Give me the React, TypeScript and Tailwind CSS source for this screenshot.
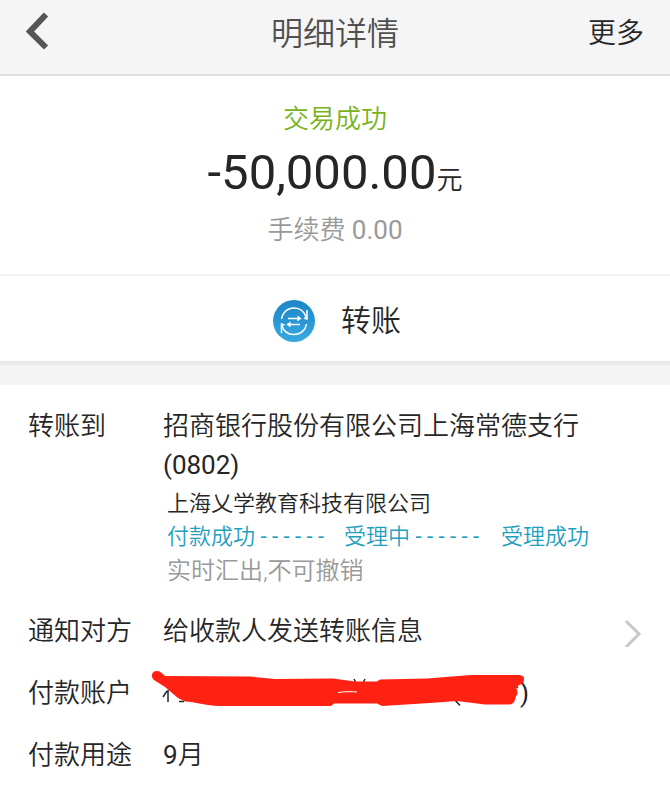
import type { ReactNode } from "react";

function Row({ label, children }: { label: string; children: ReactNode }) {
  return (
    <div className="flex">
      <dt className="w-[135px] shrink-0 text-[26px] leading-[39px]">{label}</dt>
      <dd className="min-w-0 flex-1 text-[26px] leading-[39px]">{children}</dd>
    </div>
  );
}

function TransferIcon() {
  return (
    <svg viewBox="0 0 42 42" className="h-[42px] w-[42px]" fill="none" aria-hidden="true">
      <defs>
        <linearGradient id="disc" x1="0" y1="0" x2="0" y2="1">
          <stop offset="0" stopColor="#1b86c6" />
          <stop offset="1" stopColor="#38a8e2" />
        </linearGradient>
      </defs>
      <circle cx="21" cy="21" r="21" fill="url(#disc)" />
      <g stroke="#fff" strokeWidth="1.5">
        <path d="M8.500 19C9.500 12.500 14.500 8 21 8c6 0 10.500 3.500 12.500 10" />
        <path d="M34 10v9l-3-1" />
        <path d="M33.500 24C32.500 30.500 27.500 34.500 21 34.500c-6 0-10.500-3.500-12.500-9.500" />
        <path d="M8.500 33v-9l3 1" />
        <path d="M15 18.500h10M27 24.500H17" />
      </g>
      <path d="M24.500 15.500l4 3-4 3zM17.500 21.500l-4 3 4 3z" fill="#fff" />
    </svg>
  );
}

function Redaction() {
  return (
    <svg
      viewBox="0 0 390 55"
      className="absolute -top-3 -left-[18px] h-[55px] w-[390px]"
      fill="none"
      aria-hidden="true"
    >
      <path
        d="M23 28v12M22 29l-4 6M34 39.500h5M209 17l2 4M220 17l-2 4M309 37l6 6.500M370 24l3 2"
        stroke="#262626"
        strokeWidth="1.500"
      />
      <path
        d="M12 9C15 9 17 11 20 14L105 14.500 130 17 188 16.500 210 19.500 232 19.500 235 17.500 282 16.500 326 13H373C377 13 379 14 379 17C379 21 378 22 374 23L371 26C373 29 373 32 371 34C370 39 369 42 364 42.500H340L312 39 285 41 237 44 232 41.500H189L186 44H75C60 43.500 50 40 40 39.500L33 36 20 25 9 18C5 14 7 9 12 9Z"
        fill="#ff2112"
      />
      <path d="M193 30.500c5-1 14-1 19-.5" stroke="#fff" strokeWidth="1" />
    </svg>
  );
}

export default function App() {
  return (
    <div className="min-h-screen bg-white font-['Roboto','Noto_Sans_CJK_SC',sans-serif] font-[350] text-[#262626]">
      <header className="grid grid-cols-3 items-start border-b-2 border-[#dfdfdf] bg-[#f5f5f5] px-[26px] pt-[10px] pb-4">
        <button type="button" aria-label="返回" className="justify-self-start pt-0.5">
          <svg viewBox="0 0 24 38" className="h-[38px] w-6" fill="none" aria-hidden="true">
            <path d="M20 2.500L4 19.500l16 16" stroke="#555" strokeWidth="6" />
          </svg>
        </button>
        <h1 className="justify-self-center text-[32px] leading-[48px] text-[#505050]">明细详情</h1>
        <button type="button" className="justify-self-end text-[28px] leading-[48px]">更多</button>
      </header>

      <main>
        <section className="border-b-2 border-[#f2f2f2] pt-6 pb-7 text-center">
          <p className="text-[26px] leading-[39px] text-[#77b41c]">交易成功</p>
          <p className="text-[49px] leading-[68px]">
            <span className="font-normal">-50,000.00</span>
            <span className="text-[26px]">元</span>
          </p>
          <p className="text-[26px] leading-8 text-[#999]">
            手续费 <span className="font-normal">0.00</span>
          </p>
        </section>

        <section className="flex items-center justify-center gap-[26px] pt-[22px] pb-[18px] pl-1">
          <TransferIcon />
          <h2 className="text-[30px] leading-[45px]">转账</h2>
        </section>

        <div className="h-6 border-t-4 border-[#e9e9e9] bg-[#f4f4f4]" />

        <dl className="flex flex-col gap-[23px] px-7 pt-[22px] pb-6">
          <Row label="转账到">
            <p className="max-w-[440px]">
              招商银行股份有限公司上海常德支行<span className="font-normal">(0802)</span>
            </p>
            <div className="pl-1 text-[22px] leading-[33px]">
              <p className="pt-0.5">上海乂学教育科技有限公司</p>
              <p className="flex text-[#1f9fc0]">
                <span className="w-[177px]">
                  付款成功 <span className="font-normal">- - - - - -</span>
                </span>
                <span className="w-[157px]">
                  受理中 <span className="font-normal">- - - - - -</span>
                </span>
                <span>受理成功</span>
              </p>
              <p className="text-[24px] leading-[36px] text-[#999]">实时汇出,不可撤销</p>
            </div>
          </Row>
          <Row label="通知对方">
            <button type="button" className="flex w-full items-center justify-between text-left">
              给收款人发送转账信息
              <svg viewBox="0 0 18 30" className="h-[30px] w-[18px]" fill="none" aria-hidden="true">
                <path d="M2 4l13 13L2 30" stroke="#c8c8c8" strokeWidth="3" />
              </svg>
            </button>
          </Row>
          <Row label="付款账户">
            <div className="relative pl-[357px] font-normal">
              )
              <Redaction />
            </div>
          </Row>
          <Row label="付款用途">
            <span className="font-normal">9</span>月
          </Row>
        </dl>
      </main>
    </div>
  );
}
